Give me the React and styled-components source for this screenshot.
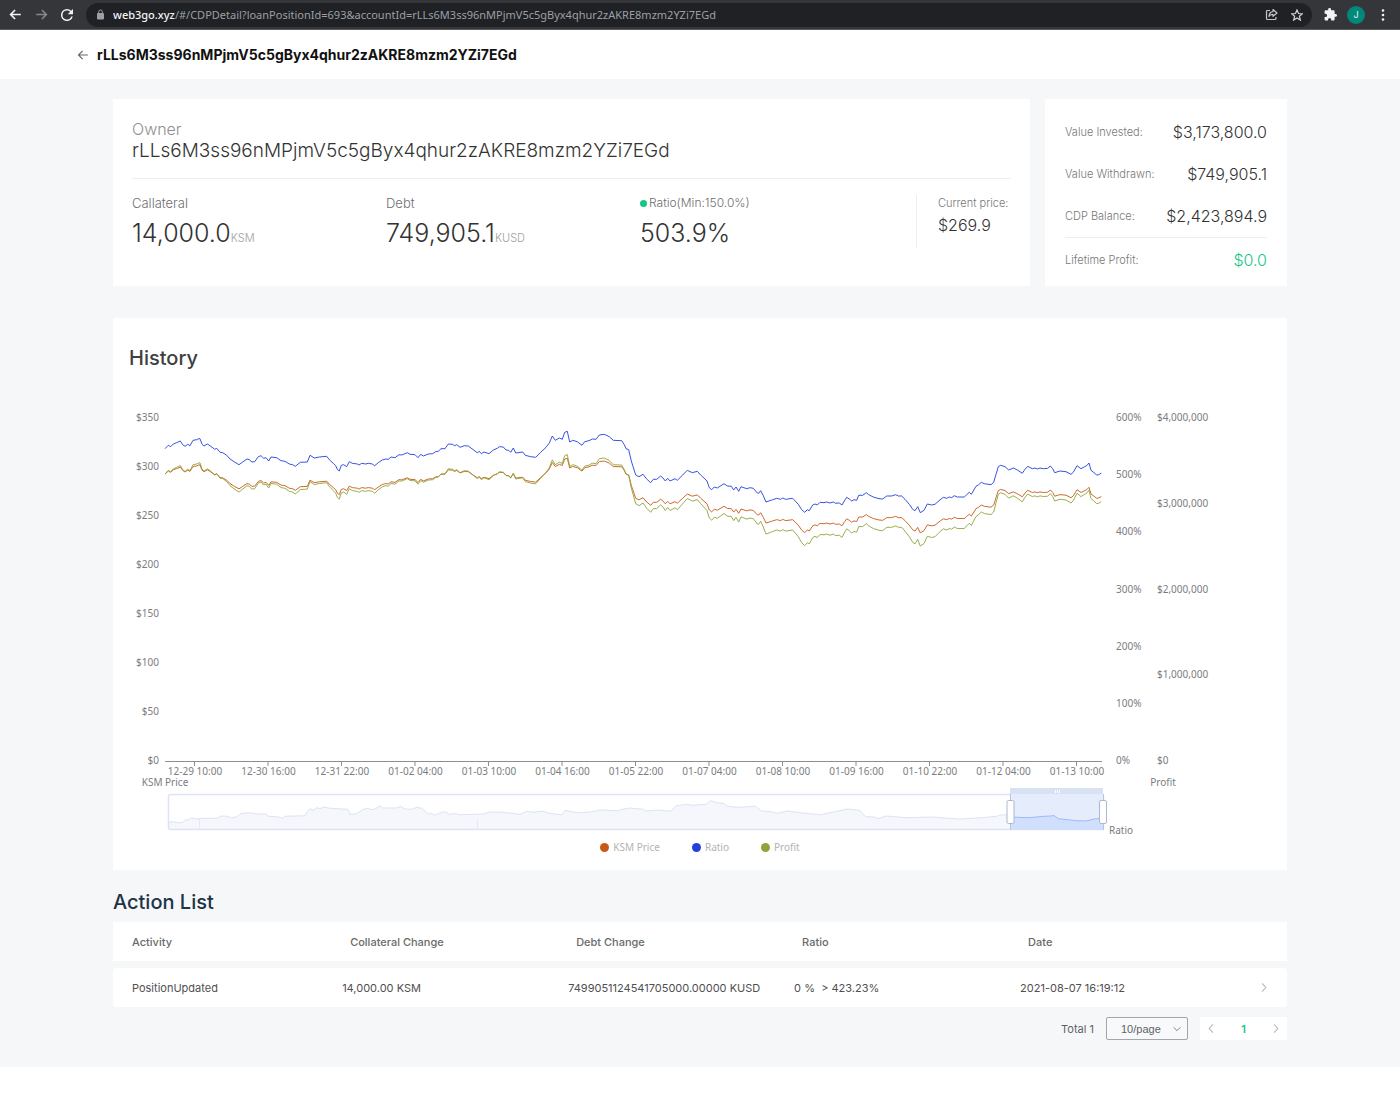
import React from "react";
import styled, { createGlobalStyle, css } from "styled-components";

const GlobalStyle = createGlobalStyle`
  *, *::before, *::after { box-sizing: border-box; }
  body {
    margin: 0;
    background: #ffffff;
    color: #3c3c3c;
    font-family: Inter, Roboto, "Liberation Sans", sans-serif;
    font-size: 12px;
    line-height: 16px;
  }
  h1, h2, p, dl, dt, dd { margin: 0; font-weight: inherit; }
  button, select { font: inherit; color: inherit; }
`;

const chartFont = css`
  font-family: "Noto Sans", "Open Sans", sans-serif;
`;

/* ---------- browser bar ---------- */

const BrowserBar = styled.div`
  display: flex;
  align-items: center;
  height: 30px;
  padding: 0 4px 0 5px;
  background: #35363a;
  border-bottom: 1px solid #5a5b5e;
`;

const BarButton = styled.button`
  display: flex;
  align-items: center;
  justify-content: center;
  flex: none;
  width: ${(p) => p.$width || 26}px;
  height: 24px;
  padding: 0;
  border: 0;
  background: none;
`;

const AddressBar = styled.div`
  display: flex;
  align-items: center;
  flex: 1;
  min-width: 0;
  height: 24px;
  margin: 0 6px 0 9px;
  padding: 0 2px 0 10px;
  border-radius: 12px;
  background: #202124;
`;

const Url = styled.span`
  ${chartFont}
  flex: 1;
  min-width: 0;
  margin-left: 8px;
  overflow: hidden;
  white-space: nowrap;
  font-size: 11px;
  color: #9aa0a6;

  b { font-weight: 500; color: #f1f3f4; }
`;

const Avatar = styled.span`
  display: flex;
  align-items: center;
  justify-content: center;
  width: 18px;
  height: 18px;
  border-radius: 50%;
  background: #00897b;
  color: #e0f2f1;
  font-size: 9px;
`;

/* ---------- page ---------- */

const TitleBar = styled.header`
  display: flex;
  align-items: center;
  gap: 8px;
  height: 49px;
  padding: 0 77px;
  background: #ffffff;
`;

const BackButton = styled.button`
  display: flex;
  padding: 0;
  border: 0;
  background: none;
`;

const PageTitle = styled.h1`
  font-size: 14px;
  font-weight: 700;
  line-height: 20px;
  color: #111111;
`;

const Page = styled.main`
  padding: 20px 113px 27px;
  background: #f5f7f9;
`;

const Card = styled.section`
  background: #ffffff;
`;

const Summary = styled.div`
  display: flex;
  gap: 15px;
  margin-bottom: 32px;
`;

const OwnerCard = styled(Card)`
  flex: 1;
  min-width: 0;
  padding: 20px 19px 32px;
`;

const Owner = styled.dl`
  padding-bottom: 15px;
  border-bottom: 1px solid #eeeeee;

  dt { font-size: 16px; line-height: 20px; font-weight: 300; color: #8f8f8f; }
  dd { font-size: 19px; line-height: 24px; font-weight: 300; color: #333333; }
`;

const Stats = styled.div`
  display: flex;
  align-items: flex-start;
  gap: 22px;
  padding-top: 16px;
`;

const StatGrid = styled.div`
  display: grid;
  grid-template-columns: repeat(3, 1fr);
  flex: 1;
`;

const StatLabel = styled.div`
  display: flex;
  align-items: center;
  gap: 2px;
  font-size: ${(p) => (p.$compact ? 12 : 13)}px;
  line-height: 16px;
  font-weight: 300;
  color: #6f6f6f;
`;

const GreenDot = styled.span`
  width: 7px;
  height: 7px;
  border-radius: 50%;
  background: #17c684;
`;

const StatValue = styled.div`
  padding-top: 6px;
  font-size: 25px;
  line-height: 32px;
  font-weight: 300;
  color: #333333;
  white-space: nowrap;
`;

const Unit = styled.span`
  font-size: 11px;
  color: #a0a0a0;
`;

const Price = styled.div`
  min-width: 95px;
  height: 53px;
  padding-left: 21px;
  border-left: 1px solid #eeeeee;
  font-weight: 300;
`;

const PriceLabel = styled.div`
  font-size: 11px;
  line-height: 16px;
  color: #777777;
  white-space: nowrap;
`;

const PriceValue = styled.div`
  padding-top: 4px;
  font-size: 16px;
  line-height: 20px;
  color: #333333;
`;

const TotalsCard = styled(Card)`
  width: 242px;
  padding: 12px 20px 4px;
`;

const TotalRow = styled.div`
  display: flex;
  align-items: center;
  justify-content: space-between;
  height: ${(p) => (p.$profit ? 44 : 42)}px;
  font-weight: 300;
  font-size: 11px;
  color: #777777;
  border-top: ${(p) => (p.$profit ? "1px solid #eeeeee" : "0")};

  strong {
    font-size: 16px;
    font-weight: 300;
    color: ${(p) => (p.$profit ? "#17c684" : "#333333")};
  }
`;

const HistoryCard = styled(Card)`
  padding: 28px 0 15px;
`;

const HistoryTitle = styled.h2`
  padding: 0 16px 31px;
  font-size: 20px;
  line-height: 24px;
  font-weight: 500;
  color: #404040;
`;

const Chart = styled.svg`
  ${chartFont}
  display: block;
  width: 100%;
  height: auto;
  font-size: 10px;
  fill: #7b7d80;
`;

const Legend = styled.ul`
  ${chartFont}
  display: flex;
  justify-content: center;
  gap: 32px;
  margin: 0;
  padding: 0;
  list-style: none;
  font-size: 10px;
  line-height: 16px;
  color: #b3b3b3;
`;

const LegendItem = styled.li`
  display: flex;
  align-items: center;
  gap: 4px;

  &::before {
    content: "";
    width: 9px;
    height: 9px;
    border-radius: 50%;
    background: ${(p) => p.$color};
  }
`;

const ListTitle = styled.h2`
  padding: 20px 0 1px;
  font-size: 20px;
  line-height: 24px;
  font-weight: 500;
  color: #1f3347;
`;

const Table = styled.table`
  width: 100%;
  table-layout: fixed;
  border-collapse: separate;
  border-spacing: 0 7px;
  font-size: 11px;

  th, td {
    height: 39px;
    padding: 0 0 0 19px;
    background: #ffffff;
    text-align: left;
    white-space: nowrap;
  }
  th { font-weight: 500; color: #6a6a6a; }
  th + th { padding-left: 27px; }
  td { color: #505050; }
  td:first-child { border-radius: 4px 0 0 4px; }
  td:last-child { border-radius: 0 4px 4px 0; }
`;

const DateCell = styled.div`
  display: flex;
  align-items: center;
  justify-content: space-between;
  padding-right: 18px;
`;

const Pager = styled.nav`
  display: flex;
  align-items: center;
  justify-content: flex-end;
  gap: 12px;
  padding-top: 3px;
  font-size: 11px;
  color: #606266;
`;

const SelectBox = styled.label`
  display: grid;
  align-items: center;
  width: 82px;
  height: 23px;

  > * { grid-area: 1 / 1; }
  > svg { justify-self: end; margin-right: 6px; pointer-events: none; }
`;

const PageSize = styled.select`
  appearance: none;
  width: 100%;
  height: 23px;
  padding: 0 20px 0 14px;
  border: 1px solid #a3a5a8;
  border-radius: 2px;
  background: #f8f9fb;
  font-family: "Liberation Sans", Arial, sans-serif;
`;

const Pages = styled.div`
  display: flex;
  background: #ffffff;
`;

const PageButton = styled.button`
  display: flex;
  align-items: center;
  justify-content: center;
  width: ${(p) => (p.$current ? 41 : 23)}px;
  height: 23px;
  padding: 0;
  border: 0;
  background: none;
  color: #17c684;
  font-weight: 600;
`;

/* ---------- icons ---------- */

const Arrow = ({ size, color, flip, width = 2 }) => (
  <svg width={size} height={size} viewBox="0 0 16 16" fill="none" stroke={color} strokeWidth={width} aria-hidden="true">
    <path d={flip ? "M1.5 8h12M8.5 2.5L14 8l-5.500 5.500" : "M14.500 8h-12M7.500 2.500L2 8l5.500 5.500"} />
  </svg>
);

const CHEVRONS = { left: "M7.500 1.500L3.500 6l4 4.500", right: "M4.500 1.500L8.500 6l-4 4.500", down: "M2 4l4 4 4-4" };

const Chevron = ({ to, size = 11, color = "#b5b8bd" }) => (
  <svg width={size} height={size} viewBox="0 0 12 12" fill="none" stroke={color} strokeWidth="1.2" aria-hidden="true">
    <path d={CHEVRONS[to]} />
  </svg>
);

const ReloadIcon = () => (
  <svg width="12" height="12" viewBox="4 4 16 16" fill="#f1f3f4" aria-hidden="true">
    <path d="M17.650 6.350A7.960 7.960 0 0 0 12 4a8 8 0 1 0 7.730 10h-2.080A6 6 0 1 1 12 6c1.660 0 3.140.69 4.220 1.780L13 11h7V4l-2.350 2.350z" />
  </svg>
);

const LockIcon = () => (
  <svg width="9" height="11" viewBox="0 0 9 11" fill="#9aa0a6" aria-hidden="true">
    <rect x="1" y="4" width="7" height="6.500" rx="1" />
    <path d="M2.700 4.500V2.800a1.800 1.800 0 0 1 3.600 0v1.700" fill="none" stroke="#9aa0a6" />
  </svg>
);

const ShareIcon = () => (
  <svg width="13" height="13" viewBox="0 0 13 13" fill="none" stroke="#c4c7ca" strokeWidth="1.200" strokeLinejoin="round" aria-hidden="true">
    <path d="M5 2.500H2.500a1 1 0 0 0-1 1v7a1 1 0 0 0 1 1h7.500a1 1 0 0 0 1-1V9" />
    <path d="M8 1.500L12 5 8 8.300V6.400C6 6.400 5 7 4 8.500 4.200 5.800 5.500 3.800 8 3.500z" />
  </svg>
);

const StarIcon = () => (
  <svg width="12" height="12" viewBox="2 2 20 20" fill="none" stroke="#d0d3d6" strokeWidth="2" aria-hidden="true">
    <path d="M12 3.500l2.500 6 6.500.5-5 4.200 1.600 6.300L12 17.100l-5.600 3.400L8 14.200 3 10l6.500-.5z" />
  </svg>
);

const PuzzleIcon = () => (
  <svg width="13" height="13" viewBox="1 1 22 22" fill="#f1f3f4" aria-hidden="true">
    <path d="M20.500 11H19V7a2 2 0 0 0-2-2h-4V3.500a2.500 2.500 0 0 0-5 0V5H4a2 2 0 0 0-2 2v3.800h1.500a2.700 2.700 0 0 1 0 5.400H2V20a2 2 0 0 0 2 2h3.800v-1.500a2.700 2.700 0 0 1 5.400 0V22H17a2 2 0 0 0 2-2v-4h1.500a2.500 2.500 0 0 0 0-5z" />
  </svg>
);

const DotsIcon = () => (
  <svg width="4" height="12" viewBox="0 0 4 12" fill="#f1f3f4" aria-hidden="true">
    <circle cx="2" cy="1.500" r="1.300" />
    <circle cx="2" cy="6" r="1.300" />
    <circle cx="2" cy="10.500" r="1.300" />
  </svg>
);

/* ---------- chart data ---------- */

const parse = (text, dx, dy, kx = 1) =>
  text.trim().split(/\s+/).map((pair) => {
    const [x, y] = pair.split(",").map(Number);
    return [(x * kx + dx) / 3, (y + dy) / 3];
  });

const PLOT = { left: 52, top: 16, width: 937, height: 343 };
const COLLATERAL = 14000;
const DEBT = 749905.1;

const samples = [
  ...parse(
    `135,143 145,133 152,137 160,129 170,125 181,120 188,131 195,136 203,130 210,134 219,118 230,116 236,113 240,113
     246,130 252,135 262,129 270,134 284,145 290,142 300,154 308,155 320,163 330,174 345,184 357,191 368,183 381,174
     388,176 396,183 404,182 415,167 423,164 431,172 438,170 446,180 453,168 470,170 483,179 495,181 508,189 518,191
     526,196 541,184 562,183 570,163 583,171 598,168 620,166 628,176 640,187 647,194 652,205 658,210 664,193 671,191
     680,197 688,182 697,187 712,189 717,192 725,187 737,189 745,187 757,189 764,194 775,185 787,177 797,174 805,175
     813,168 825,170 837,161 845,162 862,155 870,160 885,161 894,170 902,160 910,165 925,159 938,158 947,152 955,151
     963,143 975,143 985,129 997,130 1004,134 1010,131 1020,139 1033,134 1045,135`,
    -135, -48
  ),
  ...parse(
    `0,139 15,150 22,155 28,151 34,158 42,153 57,158 70,147 82,142 88,137 100,138 108,147 116,148 122,154 130,141
     137,156 158,153 166,163 182,167 197,169 212,154 228,139 238,126 247,105 256,118 268,111 277,115 284,94 292,91
     299,123 308,118 322,122 336,133 344,122 357,119 367,114 378,115 388,102 403,100 418,107 430,118 455,119 463,131
     468,143 476,146 484,180 497,222 507,227 519,220 530,234 542,245 550,235 560,235 572,225 579,231 586,240 593,232
     600,240 615,233 622,238 638,222 652,208 667,215 682,211 692,222 711,240 718,260 725,266 733,258 742,261 762,248
     772,255 784,256 791,267 798,258 806,271 813,257 830,263 840,260 850,262 862,276 866,277 872,269 880,284 888,303
     908,296 920,292 932,295 938,291 947,295 968,292 985,310 995,326 1004,334`,
    915, -48
  ),
  ...parse(
    `82,206 88,209 98,192 105,189 112,192 120,184 132,185 140,183 150,186 160,183 167,187 178,186 186,192 193,180
     200,169 208,174 215,180 222,176 230,178 236,163 248,163 259,155 266,161 280,168 297,173 308,174 320,165 335,165
     347,161 355,165 365,165 375,175 388,190 398,205 405,209 413,197 421,215 432,208 442,189 455,192 465,190 477,179
     490,169 500,172 508,168 515,170 523,164 532,168 553,168 560,161 568,154 574,160 588,136 596,131 604,124 613,128
     633,131 641,124 649,97 655,77 662,73 675,77 686,87 700,81 712,87 727,97 735,85 743,76 757,83 765,81 772,84
     780,81 790,83 803,82 811,75 818,83 824,95 840,90 858,92 873,100 880,94 891,74 903,83 914,77 920,74 927,66
     933,88 942,95 950,102 956,101 964,96`,
    1845, 72
  ),
].map(([x, y]) => {
  const ratio = 600 * (1 - y / PLOT.height);
  const price = (ratio / 100) * (DEBT / COLLATERAL);
  return { x, ratio, price, profit: price * COLLATERAL - DEBT };
});

const SERIES = [
  { key: "price", label: "KSM Price", color: "#c85a17", max: 350 },
  { key: "ratio", label: "Ratio", color: "#2440dc", max: 600 },
  { key: "profit", label: "Profit", color: "#8fa53a", max: 4000000 },
];

const toPoints = (list) => list.map(([x, y]) => `${x.toFixed(1)},${y.toFixed(1)}`).join(" ");

const overview = [
  ...parse(
    `146,244 160,242 172,245 188,244 196,237 206,236 215,230 228,234 250,232 290,232 305,225 320,226 335,230 350,228
     360,218 385,215 415,219 438,219 445,226 470,227 487,232 495,226 555,224 562,212 570,203 580,208 590,200 600,203
     612,198 630,202 684,205 690,220 710,218 730,205 745,202 750,206 765,204 780,194 787,201 830,201 842,196 855,204
     875,205 890,199 905,202 925,219 935,217 943,223 965,214 980,213 985,220 1010,218 1020,221 1090,219 1110,213
     1150,214 1200,220 1220,211 1240,214 1265,210 1290,217 1325,222 1335,208 1370,215 1410,213 1440,207 1495,209`,
    -144, -159
  ),
  ...parse(
    `98,206 122,201 155,205 160,210 190,207 222,211 235,195 250,192 262,190 275,193 310,190 320,179 335,185 350,187
     362,196 385,199 430,196 445,210 470,212 482,217 510,210 545,216 590,221 625,212 655,204 685,208 700,227 720,228
     730,233 750,225 800,230 860,228 930,234 985,230 1020,226 1030,222 1054,221`,
    1236, -159, 1.2245
  ),
];

const selected = parse(
  `1054,228 1100,230 1125,227 1162,224 1172,233 1195,236 1215,239 1240,240 1260,234 1282,232`,
  1236, -159, 1.2245
);

const DATES = [
  "12-29 10:00", "12-30 16:00", "12-31 22:00", "01-02 04:00", "01-03 10:00", "01-04 16:00", "01-05 22:00",
  "01-07 04:00", "01-08 10:00", "01-09 16:00", "01-10 22:00", "01-12 04:00", "01-13 10:00",
];

const yFor = (value, max) => PLOT.height * (1 - value / max);

const Area = ({ points, fill, stroke }) => (
  <>
    <polygon
      points={`${points[0][0]},36 ${toPoints(points)} ${points[points.length - 1][0]},36`}
      fill={fill}
    />
    <polyline points={toPoints(points)} fill="none" stroke={stroke} />
  </>
);

const Handle = ({ x }) => (
  <rect x={x - 3.5} y="6.500" width="7" height="23" rx="1.500" fill="#ffffff" stroke="#acb8d1" />
);

const HistoryChart = () => (
  <Chart viewBox="0 0 1174 438" role="img" aria-label="History of KSM price, ratio and profit">
    <g transform={`translate(${PLOT.left} ${PLOT.top})`}>
      {[0, 50, 100, 150, 200, 250, 300, 350].map((v) => (
        <text key={v} x="-6" y={yFor(v, 350) + 4} textAnchor="end">${v}</text>
      ))}
      {[0, 100, 200, 300, 400, 500, 600].map((v) => (
        <text key={v} x="951" y={yFor(v, 600) + 4}>{v}%</text>
      ))}
      {[0, 1, 2, 3, 4].map((v) => (
        <text key={v} x="992" y={yFor(v, 4) + 4}>{v ? `$${v},000,000` : "$0"}</text>
      ))}
      <path d={`M0 344.500H${PLOT.width}`} stroke="#8c8e92" />
      {DATES.map((date, i) => {
        const x = 29.500 + i * 73.500;
        return (
          <g key={date}>
            <path d={`M${x} 345v4`} stroke="#8c8e92" />
            <text x={x + 0.500} y="358" textAnchor="middle">{date}</text>
          </g>
        );
      })}
      <text x="0" y="369" textAnchor="middle">KSM Price</text>
      <text x="998" y="369" textAnchor="middle">Profit</text>
      <text x="944" y="417">Ratio</text>
      {SERIES.map((s) => (
        <polyline
          key={s.key}
          points={toPoints(samples.map((p) => [p.x, yFor(p[s.key], s.max)]))}
          fill="none"
          stroke={s.color}
          strokeOpacity="0.9"
          strokeLinejoin="round"
        />
      ))}
    </g>
    <g transform="translate(55 393)">
      <Area points={overview} fill="#f5f7fc" stroke="#dde3f2" />
      <path d="M31.500 25v11M309.500 25v11" stroke="#e3e9f6" />
      <rect x="0.500" y="0.500" width="935" height="35" rx="2" fill="none" stroke="#dde4f6" strokeWidth="1.5" />
      <rect x="842" y="0" width="93" height="36" fill="#e5edfd" />
      <Area points={selected} fill="#cfdffc" stroke="#9dbaf5" />
      <rect x="842" y="-6" width="93" height="6" fill="#d7e2f3" />
      <path d="M887.500-4v3M889.500-4v3M891.500-4v3" stroke="#ffffff" />
      <path d="M842.500 0v36M935.500 0v36" stroke="#b7c6e6" />
      <Handle x={842.5} />
      <Handle x={935} />
    </g>
  </Chart>
);

const ADDRESS = "rLLs6M3ss96nMPjmV5c5gByx4qhur2zAKRE8mzm2YZi7EGd";

const TOTALS = [
  ["Value Invested:", "$3,173,800.0"],
  ["Value Withdrawn:", "$749,905.1"],
  ["CDP Balance:", "$2,423,894.9"],
  ["Lifetime Profit:", "$0.0", true],
];

export default function App() {
  return (
    <>
      <GlobalStyle />
      <BrowserBar>
        <BarButton $width={20} aria-label="Back"><Arrow size={13} color="#f1f3f4" /></BarButton>
        <BarButton $width={32} aria-label="Forward"><Arrow size={13} color="#85878b" flip /></BarButton>
        <BarButton $width={20} aria-label="Reload"><ReloadIcon /></BarButton>
        <AddressBar>
          <LockIcon />
          <Url><b>web3go.xyz</b>/#/CDPDetail?loanPositionId=693&amp;accountId={ADDRESS}</Url>
          <BarButton aria-label="Share"><ShareIcon /></BarButton>
          <BarButton aria-label="Bookmark"><StarIcon /></BarButton>
        </AddressBar>
        <BarButton $width={24} aria-label="Extensions"><PuzzleIcon /></BarButton>
        <BarButton $width={28} aria-label="Profile"><Avatar>J</Avatar></BarButton>
        <BarButton aria-label="Menu"><DotsIcon /></BarButton>
      </BrowserBar>

      <TitleBar>
        <BackButton aria-label="Go back"><Arrow size={12} color="#666666" width={1.5} /></BackButton>
        <PageTitle>{ADDRESS}</PageTitle>
      </TitleBar>

      <Page>
        <Summary>
          <OwnerCard>
            <Owner>
              <dt>Owner</dt>
              <dd>{ADDRESS}</dd>
            </Owner>
            <Stats>
              <StatGrid>
                <div>
                  <StatLabel>Callateral</StatLabel>
                  <StatValue>14,000.0<Unit>KSM</Unit></StatValue>
                </div>
                <div>
                  <StatLabel>Debt</StatLabel>
                  <StatValue>749,905.1<Unit>KUSD</Unit></StatValue>
                </div>
                <div>
                  <StatLabel $compact><GreenDot />Ratio(Min:150.0%)</StatLabel>
                  <StatValue>503.9%</StatValue>
                </div>
              </StatGrid>
              <Price>
                <PriceLabel>Current price:</PriceLabel>
                <PriceValue>$269.9</PriceValue>
              </Price>
            </Stats>
          </OwnerCard>
          <TotalsCard>
            {TOTALS.map(([label, value, profit]) => (
              <TotalRow key={label} $profit={profit}>
                <span>{label}</span>
                <strong>{value}</strong>
              </TotalRow>
            ))}
          </TotalsCard>
        </Summary>

        <HistoryCard>
          <HistoryTitle>History</HistoryTitle>
          <HistoryChart />
          <Legend>
            {SERIES.map((s) => (
              <LegendItem key={s.key} $color={s.color}>{s.label}</LegendItem>
            ))}
          </Legend>
        </HistoryCard>

        <ListTitle>Action List</ListTitle>
        <Table>
          <colgroup>
            <col width="17.9%" />
            <col width="19.25%" />
            <col width="19.25%" />
            <col width="19.25%" />
            <col />
          </colgroup>
          <thead>
            <tr>
              <th>Activity</th>
              <th>Collateral Change</th>
              <th>Debt Change</th>
              <th>Ratio</th>
              <th>Date</th>
            </tr>
          </thead>
          <tbody>
            <tr>
              <td>PositionUpdated</td>
              <td>14,000.00 KSM</td>
              <td>7499051124541705000.00000 KUSD</td>
              <td>0 %&nbsp; &gt; 423.23%</td>
              <td><DateCell>2021-08-07 16:19:12<Chevron to="right" /></DateCell></td>
            </tr>
          </tbody>
        </Table>
        <Pager aria-label="Pagination">
          <span>Total 1</span>
          <SelectBox>
            <PageSize aria-label="Rows per page" defaultValue="10">
              <option value="10">10/page</option>
              <option value="20">20/page</option>
            </PageSize>
            <Chevron to="down" size={10} color="#7d8085" />
          </SelectBox>
          <Pages>
            <PageButton aria-label="Previous page"><Chevron to="left" /></PageButton>
            <PageButton $current aria-current="page">1</PageButton>
            <PageButton aria-label="Next page"><Chevron to="right" /></PageButton>
          </Pages>
        </Pager>
      </Page>
    </>
  );
}
